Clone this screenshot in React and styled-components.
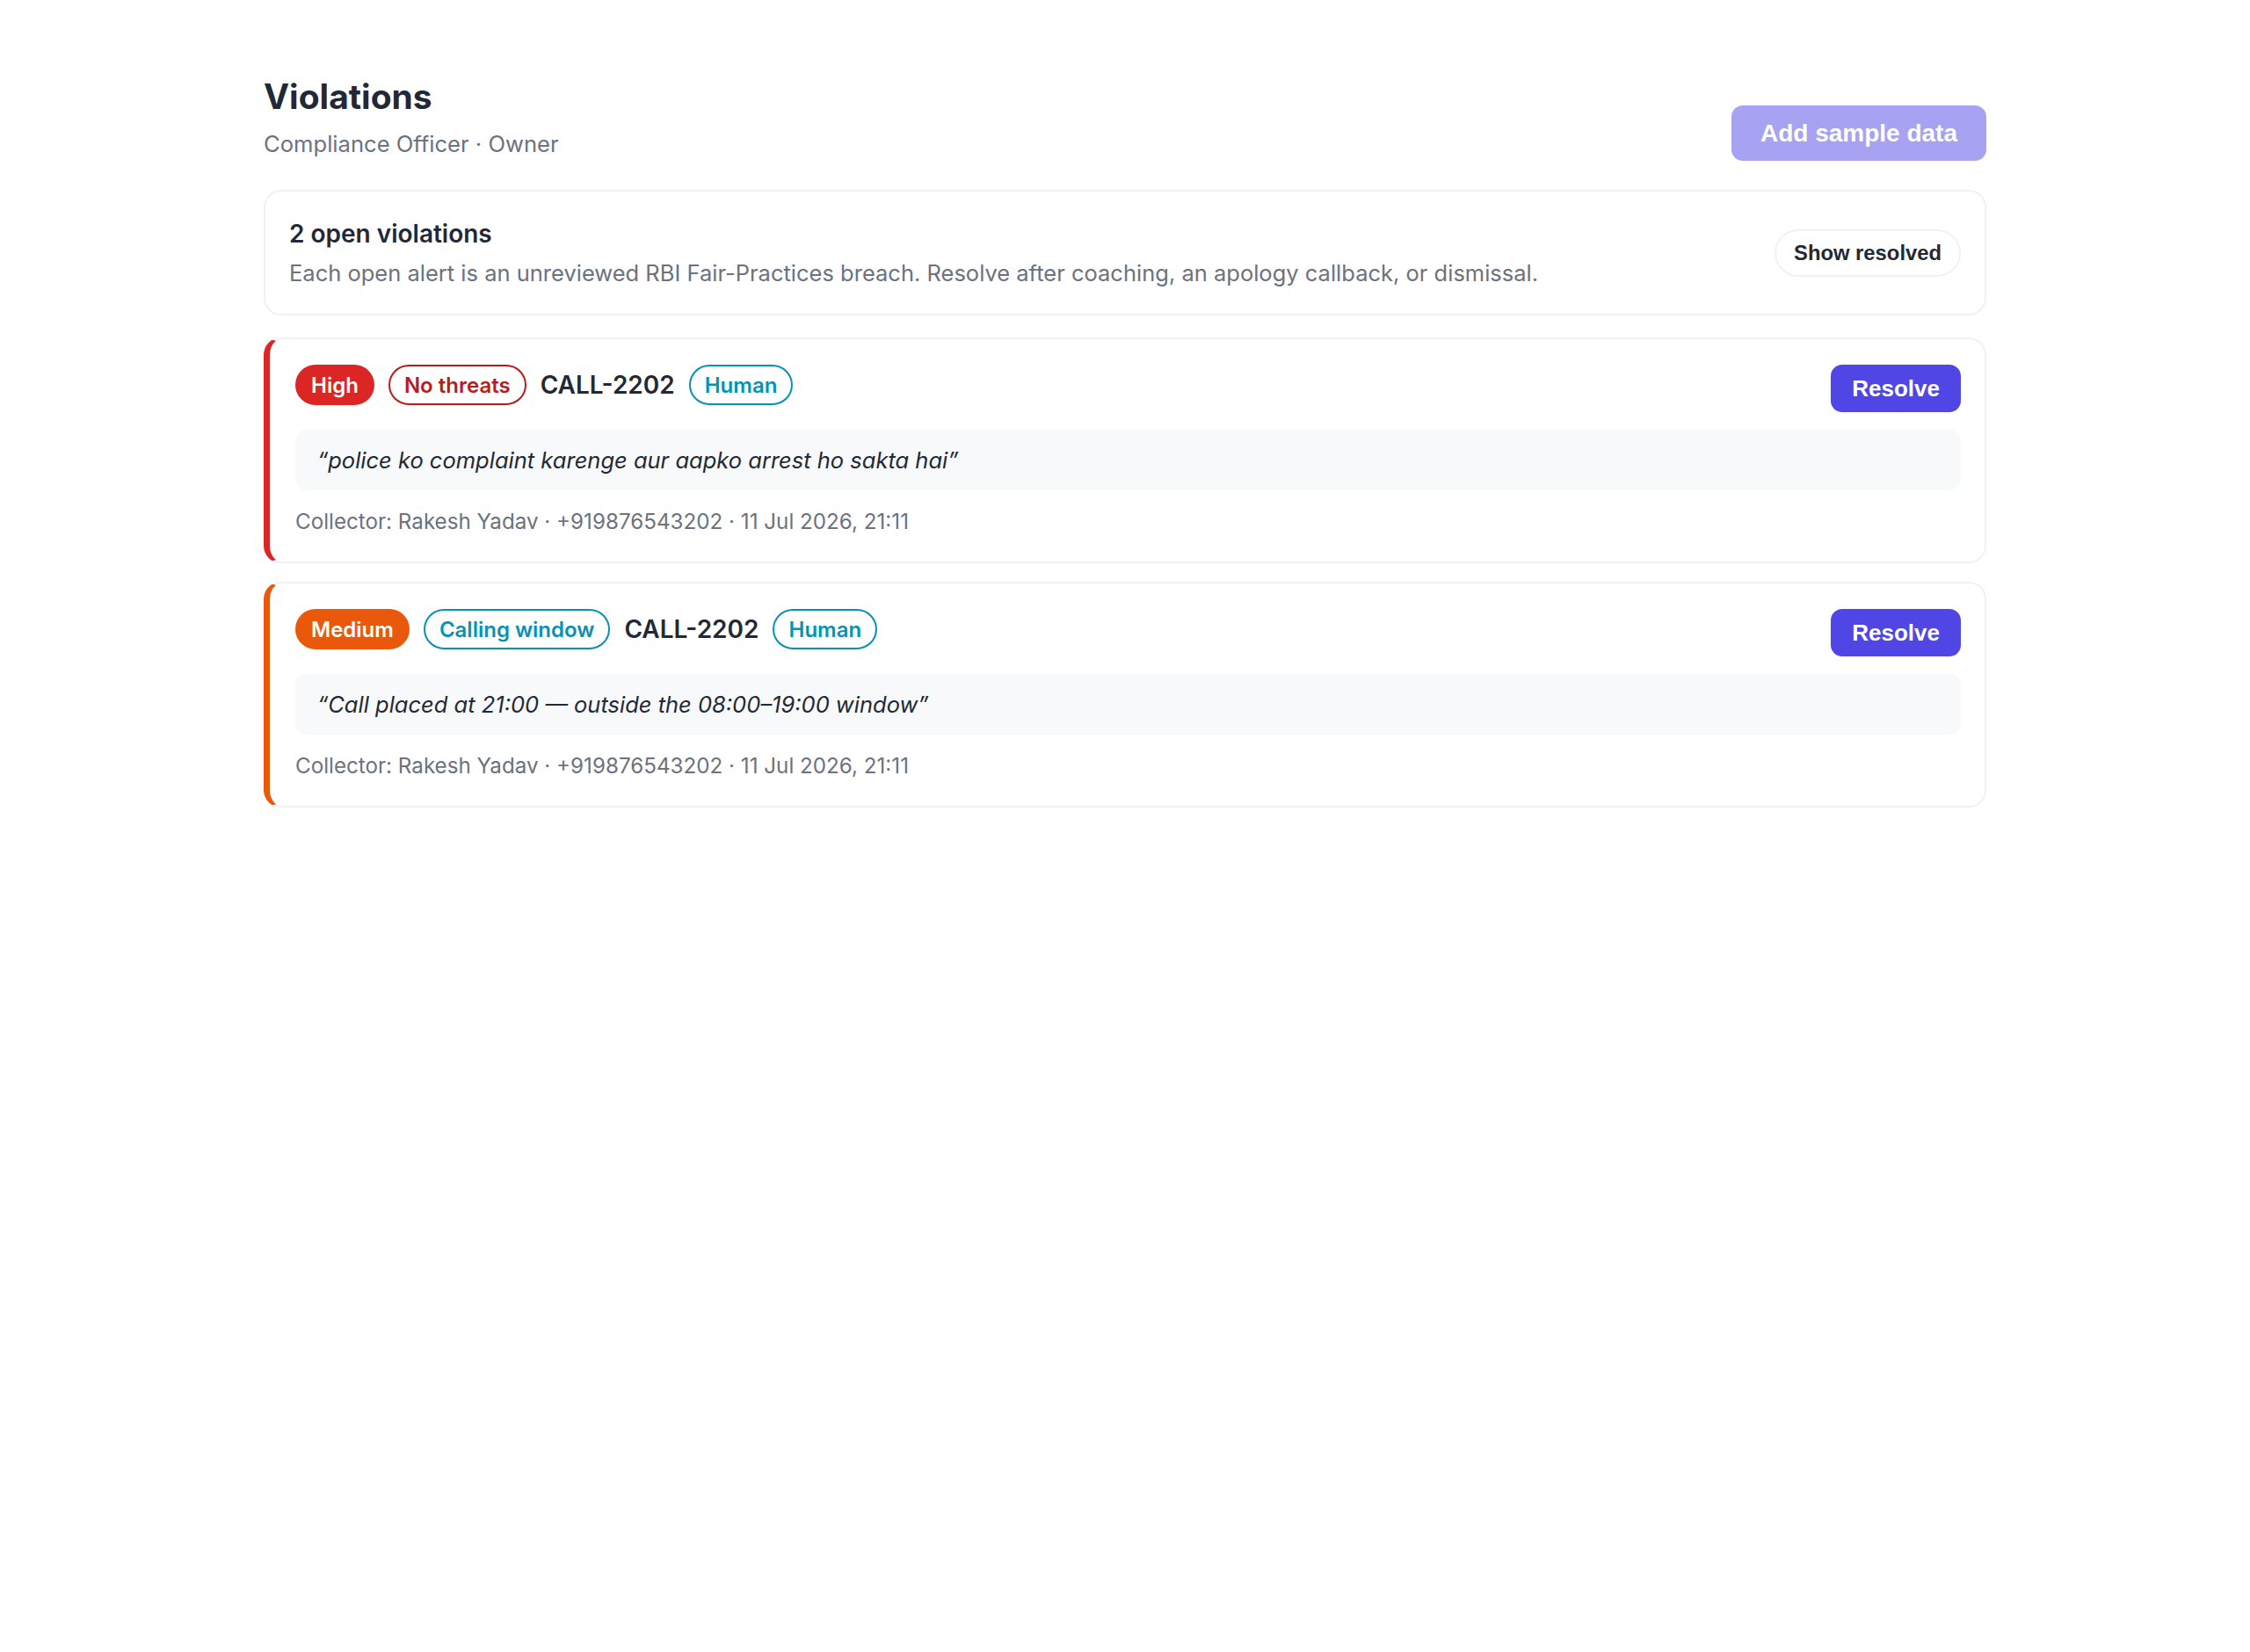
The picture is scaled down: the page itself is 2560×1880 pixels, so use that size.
import styled, { createGlobalStyle } from "styled-components";

const GlobalStyle = createGlobalStyle`
  body {
    margin: 0;
    background: #fff;
    font-family: Inter, "Noto Sans", sans-serif;
    color: #1f2937;
  }
`;

const Page = styled.div`
  width: 1960px;
  margin: 0 auto;
  padding-top: 86px;
`;

const Header = styled.div`
  display: flex;
  justify-content: space-between;
  align-items: flex-end;
  margin-bottom: 33px;
`;

const Title = styled.h1`
  margin: 0;
  font-size: 39px;
  line-height: 48px;
  font-weight: 700;
  color: #1f2937;
`;

const Subtitle = styled.div`
  font-size: 25.6px;
  line-height: 39px;
  color: #6b7280;
  margin-top: 10px;
`;

const Button = styled.button`
  font-family: "Liberation Sans", Arial, sans-serif;
  font-weight: 700;
  border: none;
  color: #fff;
  background: ${(p) => (p.$muted ? "#a7a2f1" : "#4f46e5")};
  font-size: ${(p) => (p.$large ? "28px" : "26px")};
  height: ${(p) => (p.$large ? "63px" : "54px")};
  padding: 0 ${(p) => (p.$large ? "33px" : "24px")};
  border-radius: 13px;
  cursor: pointer;
  flex-shrink: 0;
`;

const Summary = styled.div`
  display: flex;
  justify-content: space-between;
  align-items: center;
  border: 2px solid #f1f1f1;
  border-radius: 20px;
  padding: 28px 27px 27px;
  margin-bottom: 25px;
`;

const SummaryTitle = styled.div`
  font-size: 28px;
  line-height: 40px;
  font-weight: 600;
  color: #1f2937;
`;

const SummaryText = styled.div`
  font-size: 25.5px;
  line-height: 38px;
  color: #6b7280;
  margin-top: 6px;
`;

const GhostPill = styled.button`
  font-family: "Liberation Sans", Arial, sans-serif;
  font-weight: 700;
  font-size: 23.8px;
  color: #1f2937;
  background: #fff;
  border: 2px solid #f1f1f1;
  border-radius: 999px;
  height: 54px;
  padding: 0 20px;
  cursor: pointer;
`;

const List = styled.div`
  display: flex;
  flex-direction: column;
  gap: 21px;
`;

const Card = styled.div`
  border: 2px solid #f1f1f1;
  border-left: 7px solid ${(p) => p.$accent};
  border-radius: 20px;
  padding: 29px 27px 28px 29px;
`;

const CardTop = styled.div`
  display: flex;
  justify-content: space-between;
  align-items: flex-start;
  margin-bottom: 20px;
`;

const Tags = styled.div`
  display: flex;
  align-items: center;
  gap: 16px;
  height: 46px;
`;

const Pill = styled.span`
  display: inline-flex;
  align-items: center;
  height: 46px;
  box-sizing: border-box;
  padding: 0 16px;
  border-radius: 999px;
  font-size: 24px;
  font-weight: 600;
  border: 2px solid ${(p) => p.$color};
  background: ${(p) => (p.$solid ? p.$color : "#fff")};
  color: ${(p) => (p.$solid ? "#fff" : p.$color)};
`;

const CallId = styled.span`
  font-size: 28px;
  font-weight: 600;
  color: #1f2937;
`;

const Quote = styled.div`
  background: #f8f9fa;
  border-radius: 13px;
  padding: 15px 25px;
  font-size: 25.5px;
  line-height: 39px;
  font-style: italic;
  color: #1f2937;
`;

const Meta = styled.div`
  margin-top: 18px;
  font-size: 24.2px;
  line-height: 35px;
  color: #6b7280;
`;

const violations = [
  {
    id: 1,
    severity: "High",
    sevColor: "#dc2626",
    rule: "No threats",
    ruleColor: "#b91c1c",
    call: "CALL-2202",
    quote: "\u201Cpolice ko complaint karenge aur aapko arrest ho sakta hai\u201D",
  },
  {
    id: 2,
    severity: "Medium",
    sevColor: "#ea580c",
    rule: "Calling window",
    ruleColor: "#0891b2",
    call: "CALL-2202",
    quote: "\u201CCall placed at 21:00 \u2014 outside the 08:00\u201319:00 window\u201D",
  },
];

const App = () => {
  return (
    <>
      <GlobalStyle />
      <Page>
        <Header>
          <div>
            <Title>Violations</Title>
            <Subtitle>Compliance Officer · Owner</Subtitle>
          </div>
          <Button $large $muted>
            Add sample data
          </Button>
        </Header>

        <Summary>
          <div>
            <SummaryTitle>2 open violations</SummaryTitle>
            <SummaryText>
              Each open alert is an unreviewed RBI Fair-Practices breach. Resolve after coaching, an
              apology callback, or dismissal.
            </SummaryText>
          </div>
          <GhostPill>Show resolved</GhostPill>
        </Summary>

        <List>
          {violations.map((v) => (
            <Card key={v.id} $accent={v.sevColor}>
              <CardTop>
                <Tags>
                  <Pill $solid $color={v.sevColor}>
                    {v.severity}
                  </Pill>
                  <Pill $color={v.ruleColor}>{v.rule}</Pill>
                  <CallId>{v.call}</CallId>
                  <Pill $color="#0891b2">Human</Pill>
                </Tags>
                <Button>Resolve</Button>
              </CardTop>
              <Quote>{v.quote}</Quote>
              <Meta>Collector: Rakesh Yadav · +919876543202 · 11 Jul 2026, 21:11</Meta>
            </Card>
          ))}
        </List>
      </Page>
    </>
  );
};

export default App;
